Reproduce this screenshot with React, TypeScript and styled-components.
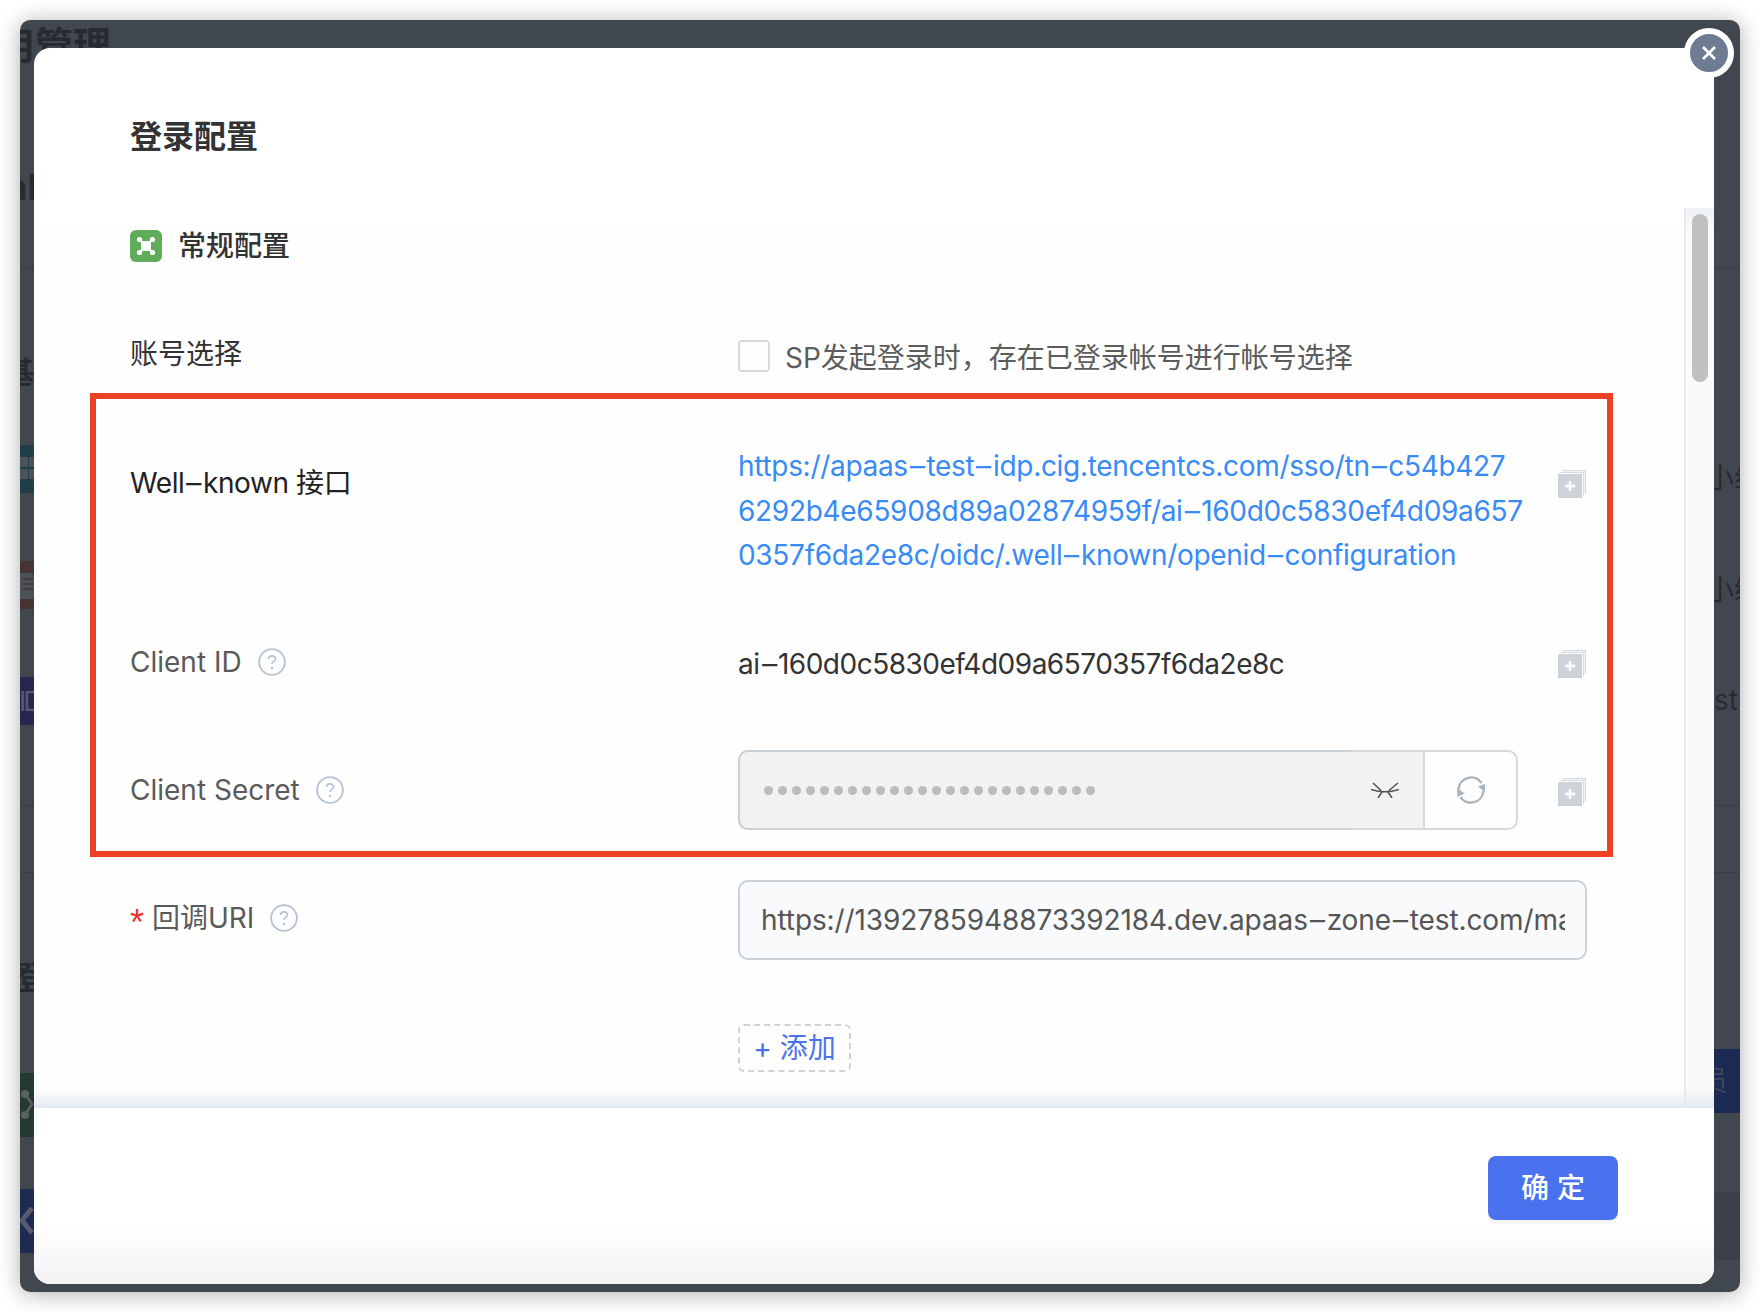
import React from "react";
import styled, { createGlobalStyle } from "styled-components";

const Global = createGlobalStyle`
  html, body { margin: 0; padding: 0; background: #fff; }
  body { width: 1760px; height: 1312px; overflow: hidden; font-family: Inter, "Noto Sans CJK SC", sans-serif; }
`;
const Page = styled.div`width: 1760px; height: 1312px; padding: 20px; box-sizing: border-box;`;
const Win = styled.div`position: relative; width: 1720px; height: 1272px; border-radius: 10px; overflow: hidden; background: #41474f;`;
const WinShadow = styled.div`border-radius: 10px; box-shadow: 0 2px 22px rgba(0,0,0,.32);`;
const Back = styled.div`height: 100%; display: flex; justify-content: space-between;`;
const Strip = styled.div<{ $w: number }>`width: ${p => p.$w}px; display: flex; flex-direction: column;`;
const Seg = styled.div<{ $h: number; $bg?: string; $line?: boolean }>`
  flex: none; height: ${p => p.$h}px; background: ${p => p.$bg || "transparent"};
  border-bottom: ${p => (p.$line ? "1px solid #383d45" : "none")}; box-sizing: border-box;
  display: flex; align-items: center; white-space: nowrap;
`;
const Ghost = styled.span<{ $size: number; $offset: number; $bold?: boolean; $color?: string; $tight?: boolean }>`
  flex: none; font-size: ${p => p.$size}px; line-height: 1; margin-left: ${p => p.$offset}px;
  font-weight: ${p => (p.$bold ? 700 : 400)}; color: ${p => p.$color || "#262b32"};
  letter-spacing: ${p => (p.$tight ? "-3px" : "0")};
`;
const Modal = styled.div`position: absolute; left: 14px; top: 28px; width: 1680px; height: 1236px; background: #fff; border-radius: 16px 0 16px 16px; display: flex; flex-direction: column; overflow: hidden;`;
const Head = styled.div`height: 160px; flex: none; padding: 70px 96px 0; box-sizing: border-box;`;
const Title = styled.h2`margin: 0; font-size: 32px; line-height: 38px; font-weight: 700; color: #333;`;
const Body = styled.div`flex: 1; display: flex; min-height: 0; position: relative;`;
const Content = styled.div`flex: 1; padding: 22px 0 0 96px; overflow: hidden; background: linear-gradient(#fff 17px, #fefefe 17px);`;
const Track = styled.div`width: 30px; flex: none; background: linear-gradient(#eef1f7, #fafafa 22px); border-left: 2px solid #e9e9ec; box-sizing: border-box; padding: 6px 6px 0;`;
const Thumb = styled.div`width: 16px; height: 168px; background: #c1c1c1; border-radius: 8px;`;
const Sec = styled.div`display: flex; align-items: center; gap: 16px; height: 32px; font-size: 28px; line-height: 30px; font-weight: 500; color: #333;`;
const Row = styled.div<{ $h: number; $top?: number }>`display: flex; height: ${p => p.$h}px; margin-top: ${p => p.$top || 0}px;`;
const LabelCol = styled.div<{ $color?: string; $pad: number }>`width: 608px; flex: none; display: flex; align-items: flex-start; padding-top: ${p => p.$pad}px; font-size: 28px; line-height: 36px; color: ${p => p.$color || "#5a5a5a"};`;
const WellKnown = styled.span`letter-spacing: -0.4px;`;
const ValueCol = styled.div<{ $pad?: number }>`width: 820px; flex: none; padding-top: ${p => p.$pad || 0}px; box-sizing: border-box;`;
const Req = styled.span`color: #e8352f; margin-right: 8px; font-family: "Liberation Sans", sans-serif; font-size: 36px; line-height: 46px;`;
const Help = styled.svg`margin: 4px 0 0 16px; flex: none;`;
const Check = styled.span`width: 32px; height: 32px; box-sizing: border-box; border: 2px solid #d9d9d9; border-radius: 4px; margin-right: 15px; flex: none;`;
const CheckRow = styled.div`display: flex; align-items: center; font-size: 28px; color: #5c5c5c; height: 36px;`;
const Link = styled.div`font-size: 28px; line-height: 44.5px; color: #388bf5; letter-spacing: -0.3px;`;
const Line = styled.span`display: block; white-space: nowrap;`;
const Plain = styled.div`font-size: 28px; line-height: 36px; color: #333; letter-spacing: -0.5px;`;
const Hy = styled.span`display: inline-block; transform: scaleX(1.7); margin: 0 3px;`;
const Field = styled.div`position: relative; display: flex; width: 780px; height: 80px; box-sizing: border-box; border: 2px solid #d6d8da; border-radius: 10px;
  &::before { content: ""; position: absolute; left: -2px; top: -2px; width: 612px; height: 80px; box-sizing: border-box; border: 2px solid #c9d1d8; border-right: none; border-radius: 10px 0 0 10px; }
`;
const SecretBox = styled.div`flex: 1; background: #f2f2f2; display: flex; align-items: center; justify-content: space-between; padding: 0 24px; border-radius: 8px 0 0 8px;`;
const Dots = styled.span`display: flex; gap: 5px;`;
const Dot = styled.i`width: 9px; height: 9px; border-radius: 50%; background: #bbb;`;
const Refresh = styled.div`width: 93px; box-sizing: border-box; flex: none; border-left: 2px solid #d6d8da; display: flex; align-items: center; justify-content: center;`;
const UriInput = styled.div`width: 849px; height: 80px; box-sizing: border-box; border: 2px solid #cbd2d9; border-radius: 10px; background: #f9fafc; padding: 0 20px 0 21px; font-size: 28px; line-height: 76px; color: #555; letter-spacing: -0.1px;`;
const UriText = styled.div`overflow: hidden; white-space: nowrap;`;
const Add = styled.div`width: 113px; height: 48px; box-sizing: border-box; border: 2px dashed #ccd2d8; border-radius: 6px; color: #4a72ee; font-size: 28px; line-height: 44px; text-align: center; margin-top: 64px; white-space: nowrap;`;
const Copy = styled.svg<{ $top: number }>`display: block; margin-top: ${p => p.$top}px; flex: none;`;
const Red = styled.div`position: absolute; left: 56px; top: 185px; width: 1523px; height: 464px; box-sizing: border-box; border: 6px solid #ee4024;`;
const Shade = styled.div`position: absolute; left: 0; right: 0; bottom: 0; height: 20px; background: linear-gradient(rgba(226,232,242,0), rgba(226,232,242,.9));`;
const Foot = styled.div`height: 176px; flex: none; display: flex; justify-content: flex-end; padding: 48px 96px 0 0; box-sizing: border-box; background: linear-gradient(#fff 65%, #f2f2f3);`;
const Btn = styled.div`width: 130px; height: 64px; border-radius: 8px; background: #4a72ee; color: #fff; font-size: 28px; line-height: 64px; text-align: center; letter-spacing: 8px; text-indent: 8px; box-shadow: 0 4px 0 rgba(0,0,0,.04); font-weight: 500;`;
const Close = styled.div`position: absolute; right: 6px; top: 8px; width: 38px; height: 38px; border-radius: 50%; background: #6e7b90; border: 6px solid #fff; display: flex; align-items: center; justify-content: center; box-sizing: content-box; z-index: 2;`;

const Hyphened = ({ text }: { text: string }) => (
  <>
    {text.split("-").map((part, i) => (
      <React.Fragment key={i}>{i > 0 && <Hy>-</Hy>}{part}</React.Fragment>
    ))}
  </>
);
const HelpIcon = () => (
  <Help width="28" height="28" viewBox="0 0 28 28" fill="none">
    <circle cx="14" cy="14" r="12.9" stroke="#b6c4d6" strokeWidth="1.9" />
    <path d="M10.5 11c0-2 1.6-3.2 3.5-3.2s3.5 1.2 3.5 3c0 2.6-3.5 2.6-3.5 5.2" stroke="#b6c4d6" strokeWidth="1.7" />
    <circle cx="14" cy="20" r="1.2" fill="#b6c4d6" />
  </Help>
);
const CopyIcon = ({ top }: { top: number }) => (
  <Copy $top={top} width="28" height="28" viewBox="0 0 28 28" fill="none">
    <path d="M4.5.7h22.8v22.8" stroke="#d5dade" strokeWidth="1.3" />
    <path d="M2.5 2.500h23v23" stroke="#d5dade" strokeWidth="1" />
    <rect x="0" y="4" width="24" height="24" fill="#cdd3d9" />
    <path d="M7 16h10M12 11v10" stroke="#fff" strokeWidth="2.4" />
  </Copy>
);

export default function App() {
  return (
    <Page>
      <Global />
      <WinShadow>
      <Win>
        <Back>
          <Strip $w={14}>
            <Seg $h={50}><Ghost $size={38} $bold $offset={-61}>应用管理</Ghost></Seg>
            <Seg $h={90} />
            <Seg $h={54}><Ghost $size={36} $bold $offset={-15}>nF</Ghost></Seg>
            <Seg $h={54} $line />
            <Seg $h={84} />
            <Seg $h={40}><Ghost $size={30} $bold $offset={-16}>基</Ghost></Seg>
            <Seg $h={53} />
            <Seg $h={48} $bg="#1f3e48">
              <svg width="14" height="48" viewBox="0 0 14 48" style={{ flex: "none" }}>
                <path d="M0 12h8v10H0zM9 12h5v10H9zM0 24h8v10H0zM9 24h5v10H9z" fill="#4a525a" />
              </svg>
            </Seg>
            <Seg $h={68} />
            <Seg $h={48} $bg="#47332f">
              <svg width="14" height="48" viewBox="0 0 14 48" style={{ flex: "none" }}>
                <path d="M0 12h11l3 3v23H0z" fill="#4b5158" />
                <path d="M3 18h10M3 23h10M3 28h10" stroke="#47332f" strokeWidth="1.6" />
              </svg>
            </Seg>
            <Seg $h={68} />
            <Seg $h={48} $bg="#26264f"><Ghost $size={27} $color="#565b70" $offset={-1} $tight>ID</Ghost></Seg>
            <Seg $h={81} $line />
            <Seg $h={67} $line />
            <Seg $h={85} />
            <Seg $h={40}><Ghost $size={32} $bold $offset={-4}>登</Ghost></Seg>
            <Seg $h={75} />
            <Seg $h={64} $bg="#24392f">
              <svg width="14" height="64" viewBox="0 0 14 64" style={{ flex: "none" }}>
                <path d="M5 21L12 31 5 42" stroke="#5a6062" strokeWidth="2.5" fill="none" />
                <circle cx="5" cy="21" r="4" fill="#5a6062" /><circle cx="5" cy="42" r="4" fill="#5a6062" />
              </svg>
            </Seg>
            <Seg $h={52} />
            <Seg $h={64} $bg="#1e2a52">
              <svg width="14" height="64" viewBox="0 0 14 64" style={{ flex: "none" }}>
                <path d="M12 19L2 31.500 12 44" stroke="#555a6c" strokeWidth="5" fill="none" />
              </svg>
            </Seg>
          </Strip>
          <Strip $w={26}>
            <Seg $h={248} $line />
            <Seg $h={195} />
            <Seg $h={30}><Ghost $size={28} $offset={-8}>小组</Ghost></Seg>
            <Seg $h={82} />
            <Seg $h={30}><Ghost $size={28} $offset={-8}>小练</Ghost></Seg>
            <Seg $h={80} />
            <Seg $h={30}><Ghost $size={28} $offset={0}>st</Ghost></Seg>
            <Seg $h={91} $line />
            <Seg $h={67} $line />
            <Seg $h={176} />
            <Seg $h={64} $bg="#1b2a52"><Ghost $size={28} $offset={-14} $color="#3d4658">员</Ghost></Seg>
            <Seg $h={80} $line />
            <Seg $h={67} $bg="#3b4049" $line />
          </Strip>
        </Back>
        <Modal>
          <Head><Title>登录配置</Title></Head>
          <Body>
            <Content>
              <Sec>
                <svg width="32" height="32" viewBox="0 0 32 32" style={{ flex: "none" }}>
                  <rect width="32" height="32" rx="6" fill="#5fad5b" />
                  <path d="M10 10l12 12M22 10L10 22" stroke="#fff" strokeWidth="2.4" />
                  <rect x="11" y="11" width="10" height="10" fill="#fff" />
                  <circle cx="9.500" cy="9.500" r="2.600" fill="#fff" /><circle cx="22.500" cy="9.500" r="2.600" fill="#fff" />
                  <circle cx="9.500" cy="22.500" r="2.600" fill="#fff" /><circle cx="22.500" cy="22.500" r="2.600" fill="#fff" />
                </svg>
                常规配置
              </Sec>
              <Row $h={108} $top={30}>
                <LabelCol $color="#333" $pad={44}>账号选择</LabelCol>
                <ValueCol $pad={46}>
                  <CheckRow><Check />SP发起登录时，存在已登录帐号进行帐号选择</CheckRow>
                </ValueCol>
              </Row>
              <Row $h={220}>
                <LabelCol $color="#222" $pad={65}><WellKnown><Hyphened text="Well-known" /> 接口</WellKnown></LabelCol>
                <ValueCol $pad={44}>
                  <Link>
                    <Line><Hyphened text="https://apaas-test-idp.cig.tencentcs.com/sso/tn-c54b427" /></Line>
                    <Line><Hyphened text="6292b4e65908d89a02874959f/ai-160d0c5830ef4d09a657" /></Line>
                    <Line><Hyphened text="0357f6da2e8c/oidc/.well-known/openid-configuration" /></Line>
                  </Link>
                </ValueCol>
                <CopyIcon top={70} />
              </Row>
              <Row $h={120}>
                <LabelCol $pad={24}>Client ID<HelpIcon /></LabelCol>
                <ValueCol $pad={26}>
                  <Plain><Hyphened text="ai-160d0c5830ef4d09a6570357f6da2e8c" /></Plain>
                </ValueCol>
                <CopyIcon top={30} />
              </Row>
              <Row $h={130}>
                <LabelCol $pad={32}>Client Secret<HelpIcon /></LabelCol>
                <ValueCol $pad={10}>
                  <Field>
                    <SecretBox>
                      <Dots>{Array.from({ length: 24 }).map((_, i) => <Dot key={i} />)}</Dots>
                      <svg width="28" height="16" viewBox="0 0 28 16" fill="none" stroke="#555" strokeWidth="1.6">
                        <path d="M0 7.500Q14 12 28 7.500M2 1l8 7.500M27 1l-9 7.500M11 10l-4 6M17 10l4 6" />
                      </svg>
                    </SecretBox>
                    <Refresh>
                      <svg width="30" height="30" viewBox="0 0 30 30" fill="none" stroke="#a9b3bb" strokeWidth="2.4">
                        <path d="M2.600 14A12.500 12.500 0 0 1 25.500 8M27.400 16A12.500 12.500 0 0 1 4.500 22" />
                        <path d="M22 11.500l7-2.500v8z" fill="#a9b3bb" stroke="none" />
                        <path d="M1 13l7.500 5.500-7 3.500z" fill="#a9b3bb" stroke="none" />
                      </svg>
                    </Refresh>
                  </Field>
                </ValueCol>
                <CopyIcon top={38} />
              </Row>
              <Row $h={220}>
                <LabelCol $pad={30}><Req>*</Req>回调URI<HelpIcon /></LabelCol>
                <ValueCol $pad={10}>
                  <UriInput><UriText><Hyphened text="https://1392785948873392184.dev.apaas-zone-test.com/mail" /></UriText></UriInput>
                  <Add>+ 添加</Add>
                </ValueCol>
              </Row>
            </Content>
            <Track><Thumb /></Track>
            <Red />
            <Shade />
          </Body>
          <Foot><Btn>确定</Btn></Foot>
        </Modal>
        <Close>
          <svg width="18" height="18" viewBox="0 0 18 18"><path d="M3 3l12 12M15 3L3 15" stroke="#fff" strokeWidth="2.6" /></svg>
        </Close>
      </Win>
      </WinShadow>
    </Page>
  );
}
